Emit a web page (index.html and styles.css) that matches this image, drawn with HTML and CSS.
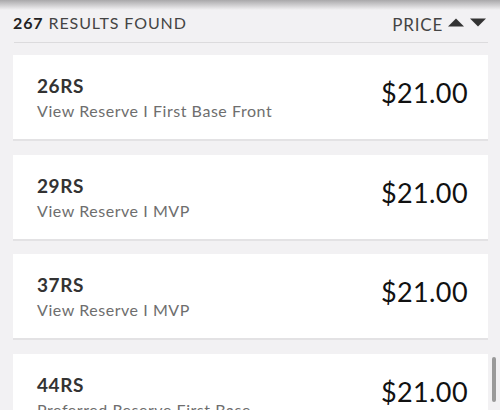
FILE: index.html
```html
<!DOCTYPE html>
<html lang="en">
<head>
  <meta charset="UTF-8" />
  <meta name="viewport" content="width=device-width, initial-scale=1.0"/>
  <title>Results</title>
  <link rel="stylesheet" href="styles.css">
</head>
<body>
  <div class="shade"></div>
  <div class="wrapper">
    <div class="results-bar">
      <div class="count"><b>267</b> RESULTS FOUND</div>
      <div class="sort">PRICE
        <svg width="39" height="9" viewBox="0 0 39 9">
          <polygon points="0,8.5 8,0.5 16,8.5" fill="#333"/>
          <polygon points="22,0.5 38,0.5 30,8.5" fill="#333"/>
        </svg>
      </div>
    </div>

    <div class="list">
      <div class="ticket">
        <div class="info">
          <div class="section">26RS</div>
          <div class="desc">View Reserve I First Base Front</div>
        </div>
        <div class="price">$21.00</div>
      </div>
      <div class="ticket">
        <div class="info">
          <div class="section">29RS</div>
          <div class="desc">View Reserve I MVP</div>
        </div>
        <div class="price">$21.00</div>
      </div>
      <div class="ticket">
        <div class="info">
          <div class="section">37RS</div>
          <div class="desc">View Reserve I MVP</div>
        </div>
        <div class="price">$21.00</div>
      </div>
      <div class="ticket">
        <div class="info">
          <div class="section">44RS</div>
          <div class="desc">Preferred Reserve First Base</div>
        </div>
        <div class="price">$21.00</div>
      </div>
    </div>
  </div>

  <!-- fake scroll thumb -->
  <div class="thumb"></div>
</body>
</html>
```

FILE: styles.css
```css
html, body {
  height: 100%;
  margin: 0;
  padding: 0;
  overflow: hidden;
}

body {
  font-family: Lato, 'Noto Sans', sans-serif;
  background: #f2f1f3;
  color: #222;
}

.shade {
  position: absolute;
  top: 0; left: 0;
  width: 100%;
  height: 10px;
  background: linear-gradient(#a9a8aa, rgba(242, 241, 243, 0));
}

.wrapper {
  padding: 0 12px 0 13px;
}

.results-bar {
  display: flex;
  justify-content: space-between;
  align-items: center;
  height: 43px;
  border-bottom: 1px solid #dcdbdd;
  margin-left: 1px;
  box-sizing: border-box;
  padding-top: 2px;
}

.count {
  font-size: 16px;
  letter-spacing: 0.9px;
  color: #444;
  margin-left: -1px;
}

.count b {
  color: #222;
}

.sort {
  font-size: 17px;
  letter-spacing: 0.8px;
  color: #444;
  display: flex;
  align-items: center;
  gap: 5px;
  margin-right: 1px;
  padding-top: 4px;
}

.sort svg {
  margin-bottom: 3px;
}

.list {
  padding-top: 12px;
  display: flex;
  flex-direction: column;
  gap: 15.5px;
}

.ticket {
  background: #fff;
  height: 84px;
  box-shadow: 0 2px 0 #e3e2e4;
  display: flex;
  justify-content: space-between;
  align-items: center;
  padding: 0 20px 0 24px;
}

.section {
  font-size: 19px;
  font-weight: bold;
  letter-spacing: 0.6px;
  color: #333;
  margin-bottom: 4px;
}

.desc {
  font-size: 16px;
  letter-spacing: 0.55px;
  color: #6e6e6e;
}

.price {
  font-size: 27px;
  letter-spacing: 0.4px;
  color: #111;
  margin-bottom: 9px;
}

.thumb {
  position: absolute;
  right: 4px;
  top: 357px;
  width: 4px;
  height: 45px;
  border-radius: 2px;
  background: #9a9a9a;
}
```
